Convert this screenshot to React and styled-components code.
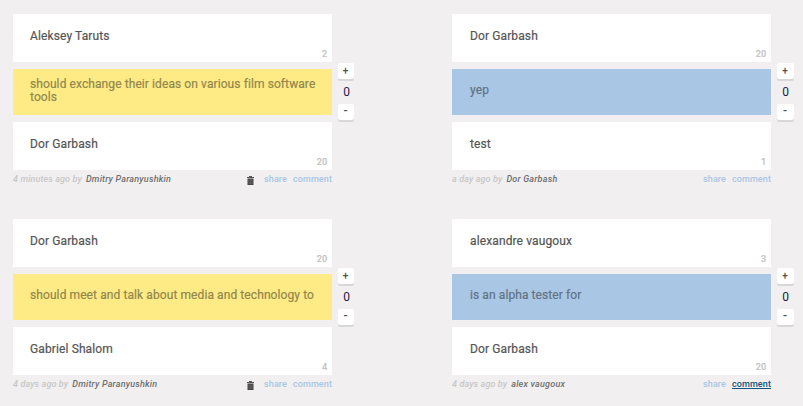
import React from "react";
import styled, { createGlobalStyle } from "styled-components";

const GlobalStyle = createGlobalStyle`
  * { box-sizing: border-box; }
  body {
    margin: 0;
    background: #f1eff0;
    font-family: Roboto, "Liberation Sans", sans-serif;
    overflow: hidden;
  }
`;

const Board = styled.main`
  display: grid;
  grid-template-columns: 342px 342px;
  column-gap: 97px;
  row-gap: 14px;
  padding: 14px 0 0 13px;
`;

const Entry = styled.article`
  display: grid;
  grid-template-columns: 319px 17px;
  column-gap: 6px;
  height: 191px;
`;

const Statement = styled.div`
  display: flex;
  flex-direction: column;
  gap: 7px;
`;

const Person = styled.div`
  display: flex;
  justify-content: space-between;
  height: 48px;
  padding: 15px 5px 0 ${(p) => (p.$tone === "yellow" ? 17 : 18)}px;
  background: #fff;
  color: #555;
  font-size: 12px;
  font-weight: 400;
  line-height: 14px;
  letter-spacing: 0.12px;
  -webkit-text-stroke: 0.2px currentColor;
`;

const Count = styled.span`
  align-self: flex-end;
  padding-bottom: 2px;
  color: #c4c4c4;
  font-size: 9px;
  font-weight: 500;
  line-height: 12px;
  letter-spacing: 0;
`;

const Relation = styled.div`
  display: flex;
  align-items: center;
  height: 46px;
  padding: 0 10px 3px ${(p) => (p.$tone === "yellow" ? 17 : 18)}px;
  background: ${(p) => (p.$tone === "yellow" ? "#feeb85" : "#a9c6e5")};
  color: ${(p) => (p.$tone === "yellow" ? "#92874c" : "#627385")};
  font-size: 12px;
  font-weight: 400;
  line-height: 13px;
  letter-spacing: 0.09px;
  -webkit-text-stroke: 0.2px currentColor;
`;

const Footer = styled.footer`
  display: flex;
  align-items: center;
  height: 14px;
  margin-top: -5px;
  font-size: 9px;
  font-weight: 500;
  line-height: 14px;
  letter-spacing: 0.1px;
`;

const Age = styled.span`
  color: #c8c8c8;
  font-style: italic;
  letter-spacing: 0.12px;
  white-space: nowrap;
`;

const Author = styled.span`
  margin-left: 4px;
  color: #707070;
  font-style: italic;
  letter-spacing: 0.22px;
  white-space: nowrap;
`;

const Actions = styled.div`
  display: flex;
  align-items: center;
  margin-left: auto;
`;

const Action = styled.a`
  margin-left: 6px;
  color: ${(p) => (p.$active ? "#125580" : "#a9c6e5")};
  text-decoration: ${(p) => (p.$active ? "underline" : "none")};
`;

const Trash = styled.svg`
  width: 7px;
  height: 9px;
  margin: 3px 4px 0 0;
`;

const Votes = styled.div`
  display: flex;
  flex-direction: column;
  align-items: flex-start;
  padding-top: 49px;
`;

const VoteButton = styled.button`
  width: ${(p) => p.$width}px;
  height: 16px;
  padding: 0 1px 1px 0;
  border: 0;
  border-radius: 2px;
  background: #fff;
  box-shadow: 0 2px 0 #d9d8d8;
  color: #505050;
  font: 500 10px/13px Roboto, sans-serif;
`;

const MinusButton = styled(VoteButton)`
  font-size: 12px;
`;

const Score = styled.span`
  width: 17px;
  height: 25px;
  color: #20204a;
  font-size: 12px;
  line-height: 26px;
  text-align: center;
`;

const entries = [
  {
    from: ["Aleksey Taruts", 2],
    relation: "should exchange their ideas on various film software tools",
    to: ["Dor Garbash", 20],
    tone: "yellow",
    age: "4 minutes ago by",
    author: "Dmitry Paranyushkin",
    own: true,
  },
  {
    from: ["Dor Garbash", 20],
    relation: "yep",
    to: ["test", 1],
    tone: "blue",
    age: "a day ago by",
    author: "Dor Garbash",
  },
  {
    from: ["Dor Garbash", 20],
    relation: "should meet and talk about media and technology to",
    to: ["Gabriel Shalom", 4],
    tone: "yellow",
    age: "4 days ago by",
    author: "Dmitry Paranyushkin",
    own: true,
  },
  {
    from: ["alexandre vaugoux", 3],
    relation: "is an alpha tester for",
    to: ["Dor Garbash", 20],
    tone: "blue",
    age: "4 days ago by",
    author: "alex vaugoux",
    active: true,
  },
];

function PersonRow({ person: [name, count], tone }) {
  return (
    <Person $tone={tone}>
      <span>{name}</span>
      <Count>{count}</Count>
    </Person>
  );
}

function TrashIcon() {
  return (
    <Trash viewBox="0 0 7 9" aria-hidden="true">
      <path d="M2 0h3v1h2v1H0V1h2z" fill="#555" />
      <path d="M0.5 2.5h6V9h-6z" fill="#484848" />
      <path d="M2 3.5V8M3.5 3.5V8M5 3.5V8" stroke="#747474" strokeWidth="0.5" />
    </Trash>
  );
}

export default function App() {
  return (
    <>
      <GlobalStyle />
      <Board>
        {entries.map((e, i) => {
          const width = e.tone === "yellow" ? 16 : 17;
          return (
            <Entry key={i}>
              <Statement>
                <PersonRow person={e.from} tone={e.tone} />
                <Relation $tone={e.tone}>{e.relation}</Relation>
                <PersonRow person={e.to} tone={e.tone} />
                <Footer>
                  <Age>{e.age}</Age>
                  <Author>{e.author}</Author>
                  <Actions>
                    {e.own && <TrashIcon />}
                    <Action>share</Action>
                    <Action $active={e.active}>comment</Action>
                  </Actions>
                </Footer>
              </Statement>
              <Votes>
                <VoteButton $width={width}>+</VoteButton>
                <Score>0</Score>
                <MinusButton $width={width}>-</MinusButton>
              </Votes>
            </Entry>
          );
        })}
      </Board>
    </>
  );
}
